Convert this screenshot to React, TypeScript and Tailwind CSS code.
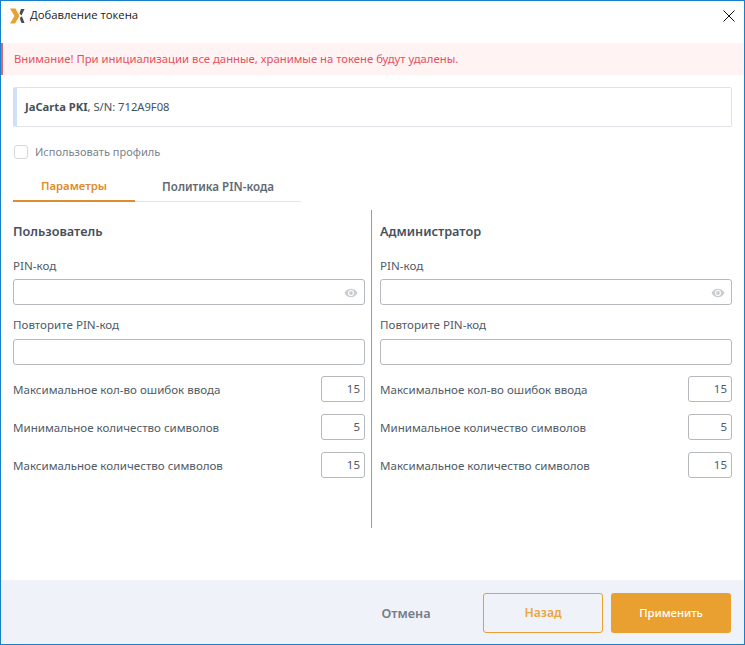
function EyeIcon() {
  return (
    <svg width="14" height="10" viewBox="0 0 14 10" className="absolute right-[6px] top-[8px]">
      <path d="M0.5 5C2 2.2 4.3 0.8 7 0.8S12 2.2 13.5 5C12 7.8 9.7 9.2 7 9.2S2 7.8 0.5 5Z" fill="#c9cdd1" />
      <circle cx="7" cy="5" r="3" fill="#fff" />
      <circle cx="7" cy="5" r="1.9" fill="#c9cdd1" />
    </svg>
  );
}

function NumberRow({ label, value, className }: { label: string; value: string; className: string }) {
  return (
    <div className={`flex items-center justify-between h-[26px] ${className}`}>
      <span className="pt-[2px] text-[11.55px] text-[#4f5b66]">{label}</span>
      <div className="w-[44px] h-[26px] border border-[#b5b9bd] rounded-[3px] bg-white flex items-center justify-end pr-[4px] text-[11.5px] text-[#4f5b66]">
        {value}
      </div>
    </div>
  );
}

function PinColumn({ title, className }: { title: string; className: string }) {
  return (
    <div className={`w-[352px] ${className}`}>
      <div className="h-[20px] mt-[12px] flex items-center text-[12.7px] font-semibold text-[#46505a]">{title}</div>
      <div className="h-[18px] mt-[15px] flex items-center text-[11.6px] text-[#4f5b66]">PIN-код</div>
      <div className="relative h-[26px] mt-[4px] border border-[#b5b9bd] rounded-[3px] bg-white">
        <EyeIcon />
      </div>
      <div className="h-[18px] mt-[11px] flex items-center text-[11.6px] text-[#4f5b66]">Повторите PIN-код</div>
      <div className="h-[26px] mt-[5px] border border-[#b5b9bd] rounded-[3px] bg-white" />
      <NumberRow className="mt-[11px]" label="Максимальное кол-во ошибок ввода" value="15" />
      <NumberRow className="mt-[12px]" label="Минимальное количество символов" value="5" />
      <NumberRow className="mt-[12px]" label="Максимальное количество символов" value="15" />
    </div>
  );
}

export default function App() {
  return (
    <div className="w-[745px] h-[645px] flex flex-col bg-white border border-[#1a7fc9] font-['Noto_Sans',sans-serif] overflow-hidden">
      {/* title bar */}
      <div className="h-[42px] shrink-0 flex items-center pl-[9px] pr-[9px] pb-[13px]">
        <svg width="15" height="16" viewBox="0 0 15 16">
          <path d="M0 0.5H5.5L9.5 8L5 15.5H0L4.5 8Z" fill="#e9a030" />
          <path d="M9.5 5.5L11 1H14.5L11.5 7.5Z" fill="#4a4a4a" />
          <path d="M10.5 9L12 8.5L14.5 15H11.5L10 11Z" fill="#4a4a4a" />
        </svg>
        <span className="ml-[5px] text-[11.3px] text-[#1a1a1a] font-['Open_Sans',sans-serif]">Добавление токена</span>
        <svg className="ml-auto" width="12" height="12" viewBox="0 0 12 12">
          <path d="M0.5 0.5L11.5 11.5M11.5 0.5L0.5 11.5" stroke="#111" strokeWidth="1" fill="none" />
        </svg>
      </div>

      {/* warning */}
      <div className="h-[32px] shrink-0 flex items-center bg-[#fff4f3] border-l-[2px] border-[#d2687a] pl-[11px] text-[11.3px] text-[#e5505f]">
        Внимание! При инициализации все данные, хранимые на токене будут удалены.
      </div>

      {/* token card */}
      <div className="h-[40px] shrink-0 mt-[12px] mx-[12px] flex items-center border border-[#dfe2e6] border-l-[4px] border-l-[#cfe0fb] rounded-[2px] pl-[8px] text-[11.2px] text-[#46505a]">
        <span className="font-bold">JaCarta PKI</span>
        <span>, S/N: 712A9F08</span>
      </div>

      {/* profile */}
      <div className="h-[14px] shrink-0 mt-[18px] ml-[13px] flex items-center">
        <div className="w-[14px] h-[14px] border border-[#d5d7da] rounded-[3px]" />
        <span className="ml-[7px] text-[11.05px] text-[#7a838c]">Использовать профиль</span>
      </div>

      {/* tabs */}
      <div className="w-[288px] h-[29px] shrink-0 mt-[14px] ml-[12px] flex border-b border-[#e3e5e8]">
        <div className="w-[122px] h-[29px] flex items-center justify-center border-b-[2px] border-[#dc8d2d] text-[11.3px] font-semibold text-[#e08a28]">
          Параметры
        </div>
        <div className="w-[166px] flex items-center justify-center text-[11.6px] font-semibold text-[#5f6973]">
          Политика PIN-кода
        </div>
      </div>

      {/* pin columns */}
      <div className="flex h-[318px] shrink-0 mt-[8px] ml-[12px]">
        <PinColumn title="Пользователь" className="" />
        <div className="w-px h-[318px] ml-[6px] bg-[#9a9a9a]" />
        <PinColumn title="Администратор" className="ml-[8px]" />
      </div>

      {/* footer */}
      <div className="mt-auto h-[64px] shrink-0 bg-[#eff2f9] flex items-center pr-[13px] pt-[2px]">
        <div className="ml-auto w-[122px] text-center text-[12.7px] font-semibold text-[#747d88] mr-[16px] pt-[1px]">Отмена</div>
        <div className="w-[120px] h-[40px] rounded-[3px] border border-[#e9a030] flex items-center justify-center pt-[1px] text-[12.2px] font-semibold text-[#eba63c]">
          Назад
        </div>
        <div className="w-[120px] h-[40px] ml-[8px] rounded-[3px] bg-[#e9a030] flex items-center justify-center pt-[1px] text-[11.3px] font-medium text-white">
          Применить
        </div>
      </div>
    </div>
  );
}
